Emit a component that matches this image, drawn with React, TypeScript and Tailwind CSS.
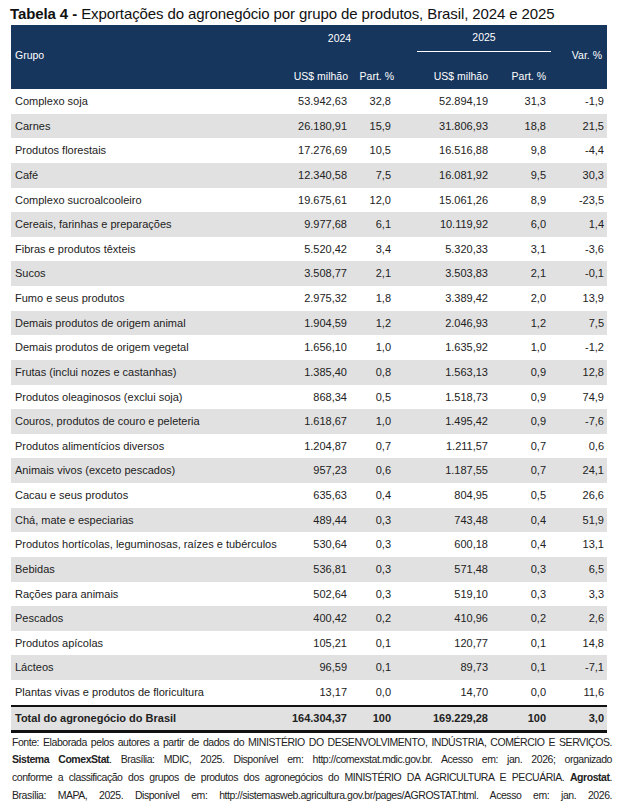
const rows: [string, string, string, string, string, string][] = [
  ["Complexo soja", "53.942,63", "32,8", "52.894,19", "31,3", "-1,9"],
  ["Carnes", "26.180,91", "15,9", "31.806,93", "18,8", "21,5"],
  ["Produtos florestais", "17.276,69", "10,5", "16.516,88", "9,8", "-4,4"],
  ["Café", "12.340,58", "7,5", "16.081,92", "9,5", "30,3"],
  ["Complexo sucroalcooleiro", "19.675,61", "12,0", "15.061,26", "8,9", "-23,5"],
  ["Cereais, farinhas e preparações", "9.977,68", "6,1", "10.119,92", "6,0", "1,4"],
  ["Fibras e produtos têxteis", "5.520,42", "3,4", "5.320,33", "3,1", "-3,6"],
  ["Sucos", "3.508,77", "2,1", "3.503,83", "2,1", "-0,1"],
  ["Fumo e seus produtos", "2.975,32", "1,8", "3.389,42", "2,0", "13,9"],
  ["Demais produtos de origem animal", "1.904,59", "1,2", "2.046,93", "1,2", "7,5"],
  ["Demais produtos de origem vegetal", "1.656,10", "1,0", "1.635,92", "1,0", "-1,2"],
  ["Frutas (inclui nozes e castanhas)", "1.385,40", "0,8", "1.563,13", "0,9", "12,8"],
  ["Produtos oleaginosos (exclui soja)", "868,34", "0,5", "1.518,73", "0,9", "74,9"],
  ["Couros, produtos de couro e peleteria", "1.618,67", "1,0", "1.495,42", "0,9", "-7,6"],
  ["Produtos alimentícios diversos", "1.204,87", "0,7", "1.211,57", "0,7", "0,6"],
  ["Animais vivos (exceto pescados)", "957,23", "0,6", "1.187,55", "0,7", "24,1"],
  ["Cacau e seus produtos", "635,63", "0,4", "804,95", "0,5", "26,6"],
  ["Chá, mate e especiarias", "489,44", "0,3", "743,48", "0,4", "51,9"],
  ["Produtos hortícolas, leguminosas, raízes e tubérculos", "530,64", "0,3", "600,18", "0,4", "13,1"],
  ["Bebidas", "536,81", "0,3", "571,48", "0,3", "6,5"],
  ["Rações para animais", "502,64", "0,3", "519,10", "0,3", "3,3"],
  ["Pescados", "400,42", "0,2", "410,96", "0,2", "2,6"],
  ["Produtos apícolas", "105,21", "0,1", "120,77", "0,1", "14,8"],
  ["Lácteos", "96,59", "0,1", "89,73", "0,1", "-7,1"],
  ["Plantas vivas e produtos de floricultura", "13,17", "0,0", "14,70", "0,0", "11,6"],
];

const cols = "grid grid-cols-[280px_60px_45px_97px_59px_1fr]";
const line = "whitespace-nowrap text-justify [text-align-last:justify]";

export default function App() {
  return (
    <div className="w-[624px] h-[808px] bg-white text-[#222] font-['Liberation_Sans',Arial,sans-serif] overflow-hidden">
      {/* Title */}
      <h1 className="pl-[10px] pt-[5px] h-[25px] text-[15px] leading-[18px] text-[#111] whitespace-nowrap tracking-[-0.1px]">
        <span className="font-bold">Tabela 4 - </span>
        Exportações do agronegócio por grupo de produtos, Brasil, 2024 e 2025
      </h1>

      <div className="ml-[11px] w-[596px]">
        {/* Header */}
        <div className={`${cols} bg-[#17365d] text-white text-[10.5px] h-[64px]`}>
          <div className="row-span-2 flex items-center pl-[4px] pb-[2px]">Grupo</div>
          <div className="col-span-2 flex items-center justify-center h-[27px] pr-[8px]">2024</div>
          <div className="col-span-2 h-[27px] flex justify-end pr-[1px]">
            <div className="w-[134px] flex items-center justify-center border-b border-white">2025</div>
          </div>
          <div className="row-span-2 flex items-center justify-end pr-[5px] pb-[2px]">Var. %</div>
          <div className="flex items-center justify-end pr-[3px] pt-[6px]">US$ milhão</div>
          <div className="flex items-center justify-end pr-[2px] pt-[6px]">Part. %</div>
          <div className="flex items-center justify-end pr-[5px] pt-[6px]">US$ milhão</div>
          <div className="flex items-center justify-end pr-[6px] pt-[6px]">Part. %</div>
        </div>

        {/* Body */}
        {rows.map((r, i) => (
          <div
            key={r[0]}
            className={`${cols} h-[24.64px] items-center text-[11px] ${i % 2 === 1 ? "bg-[#e1e1e1]" : "bg-white"}`}
          >
            <div className="pl-[4px] whitespace-nowrap">{r[0]}</div>
            <div className="text-right pr-[4px]">{r[1]}</div>
            <div className="text-right pr-[5px]">{r[2]}</div>
            <div className="text-right pr-[5px]">{r[3]}</div>
            <div className="text-right pr-[6px]">{r[4]}</div>
            <div className="text-right pr-[3px]">{r[5]}</div>
          </div>
        ))}

        {/* Total */}
        <div className={`${cols} h-[28px] items-center text-[11px] font-bold bg-[#e1e1e1] border-t-2 border-b-[3px] border-[#111]`}>
          <div className="pl-[4px] whitespace-nowrap">Total do agronegócio do Brasil</div>
          <div className="text-right pr-[4px]">164.304,37</div>
          <div className="text-right pr-[5px]">100</div>
          <div className="text-right pr-[5px]">169.229,28</div>
          <div className="text-right pr-[6px]">100</div>
          <div className="text-right pr-[3px]">3,0</div>
        </div>
      </div>

      {/* Source */}
      <div className="mx-[12px] mt-[1px] text-[10.5px] leading-[17.8px] tracking-[-0.45px]">
        <p className={line}>
          Fonte: Elaborada pelos autores a partir de dados do MINISTÉRIO DO DESENVOLVIMENTO, INDÚSTRIA, COMÉRCIO E SERVIÇOS.
        </p>
        <p className={line}>
          <span className="font-bold">Sistema ComexStat</span>. Brasília: MDIC, 2025. Disponível em: http://comexstat.mdic.gov.br. Acesso em: jan. 2026; organizado
        </p>
        <p className={line}>
          conforme a classificação dos grupos de produtos dos agronegócios do MINISTÉRIO DA AGRICULTURA E PECUÁRIA. <span className="font-bold">Agrostat</span>.
        </p>
        <p className={line}>
          Brasília: MAPA, 2025. Disponível em: http://sistemasweb.agricultura.gov.br/pages/AGROSTAT.html. Acesso em: jan. 2026.
        </p>
      </div>
    </div>
  );
}
